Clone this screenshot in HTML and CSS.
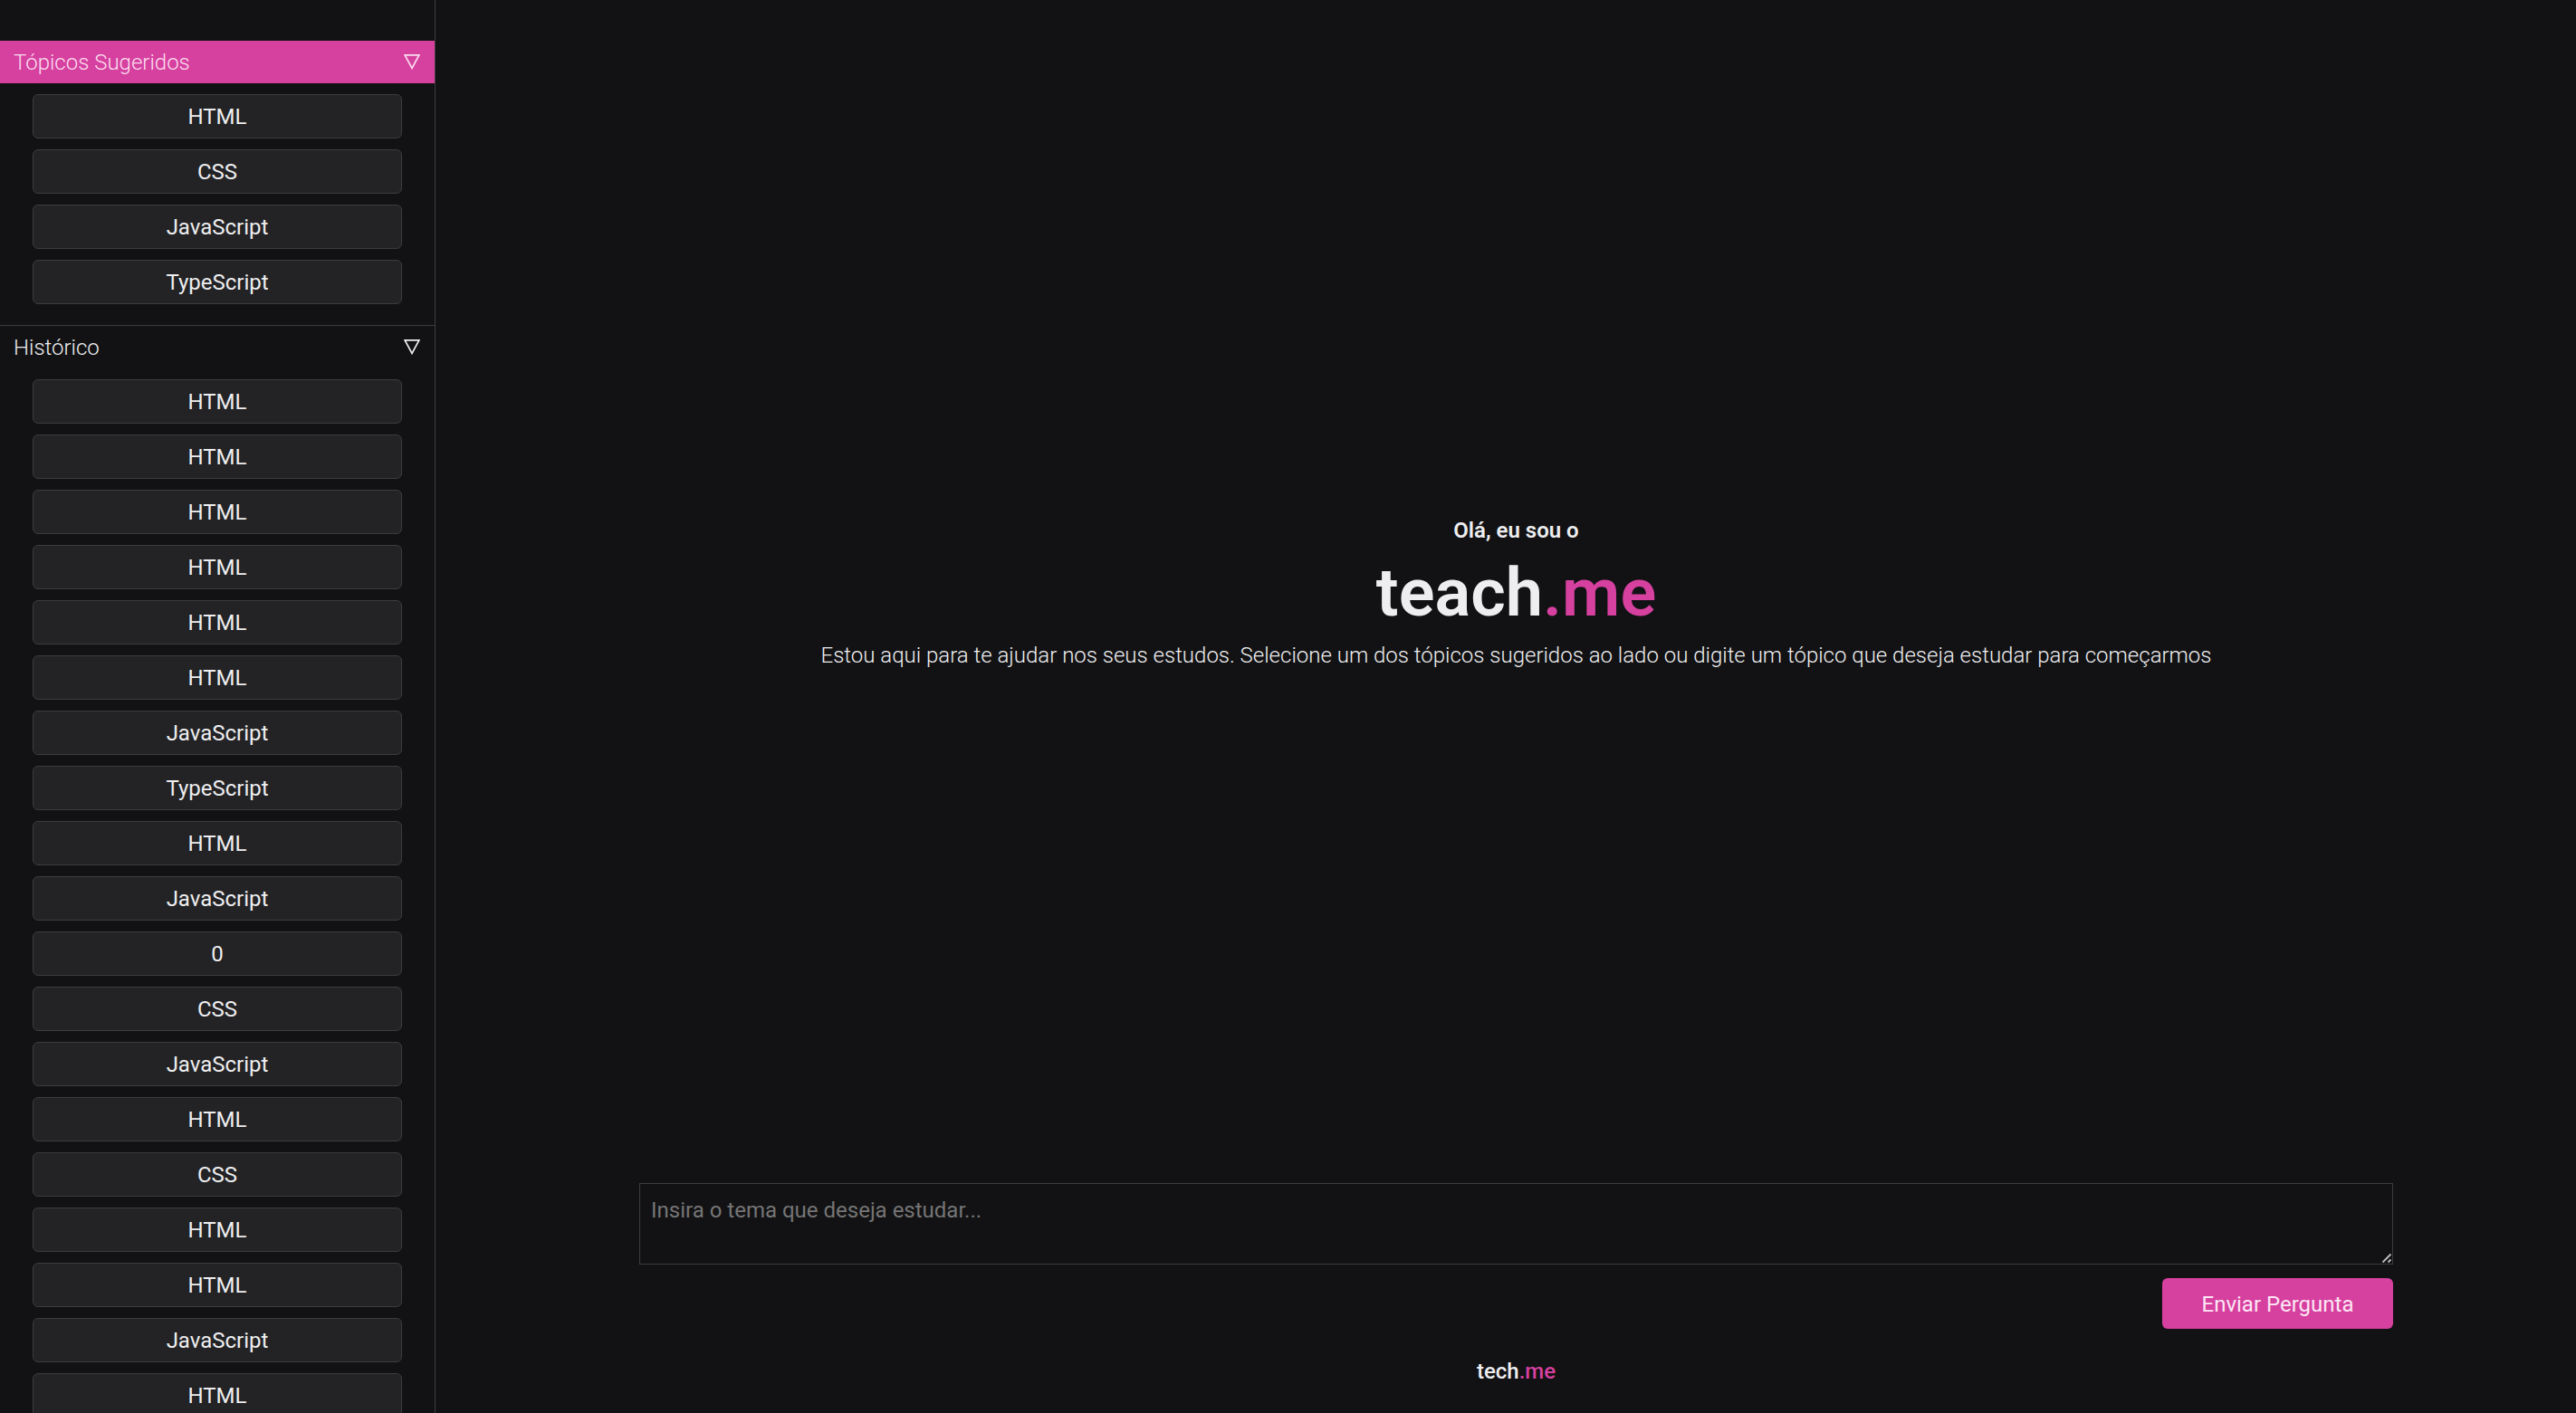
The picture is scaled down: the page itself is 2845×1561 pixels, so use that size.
FILE: index.html
```html
<!DOCTYPE html>
<html lang="pt-BR">
<head>
<meta charset="utf-8">
<meta name="viewport" content="width=device-width, initial-scale=1">
<title>teach.me</title>
<link rel="stylesheet" href="styles.css">
</head>
<body>
<div class="app">
  <aside class="sidebar">
    <section class="group">
      <button type="button" class="group-toggle active" aria-expanded="true">
        <span>Tópicos Sugeridos</span>
        <svg class="chevron" viewBox="0 0 18 17" aria-hidden="true"><path d="M1.2 .9H16.8L9 15.4Z"/></svg>
      </button>
      <ul class="topics">
        <li><button type="button" class="topic">HTML</button></li>
        <li><button type="button" class="topic">CSS</button></li>
        <li><button type="button" class="topic">JavaScript</button></li>
        <li><button type="button" class="topic">TypeScript</button></li>
      </ul>
    </section>
    <section class="group">
      <button type="button" class="group-toggle" aria-expanded="true">
        <span>Histórico</span>
        <svg class="chevron" viewBox="0 0 18 17" aria-hidden="true"><path d="M1.2 .9H16.8L9 15.4Z"/></svg>
      </button>
      <ul class="topics">
        <li><button type="button" class="topic">HTML</button></li>
        <li><button type="button" class="topic">HTML</button></li>
        <li><button type="button" class="topic">HTML</button></li>
        <li><button type="button" class="topic">HTML</button></li>
        <li><button type="button" class="topic">HTML</button></li>
        <li><button type="button" class="topic">HTML</button></li>
        <li><button type="button" class="topic">JavaScript</button></li>
        <li><button type="button" class="topic">TypeScript</button></li>
        <li><button type="button" class="topic">HTML</button></li>
        <li><button type="button" class="topic">JavaScript</button></li>
        <li><button type="button" class="topic">0</button></li>
        <li><button type="button" class="topic">CSS</button></li>
        <li><button type="button" class="topic">JavaScript</button></li>
        <li><button type="button" class="topic">HTML</button></li>
        <li><button type="button" class="topic">CSS</button></li>
        <li><button type="button" class="topic">HTML</button></li>
        <li><button type="button" class="topic">HTML</button></li>
        <li><button type="button" class="topic">JavaScript</button></li>
        <li><button type="button" class="topic">HTML</button></li>
      </ul>
    </section>
  </aside>
  <main class="main">
    <div class="hero">
      <p class="greeting">Olá, eu sou o</p>
      <h1 class="title">teach<span class="accent">.me</span></h1>
      <p class="intro">Estou aqui para te ajudar nos seus estudos. Selecione um dos tópicos sugeridos ao lado ou digite um tópico que deseja estudar para começarmos</p>
    </div>
    <form class="composer">
      <textarea class="question" aria-label="Tema de estudo" placeholder="Insira o tema que deseja estudar..."></textarea>
      <button type="submit" class="send">Enviar Pergunta</button>
    </form>
    <footer class="footer">tech<span class="accent">.me</span></footer>
  </main>
</div>
</body>
</html>
```
FILE: styles.css
```css
:root {
  color-scheme: dark;
  --bg: #121214;
  --surface: #232325;
  --line: #3c3c3f;
  --text: #eeeef0;
  --accent: #d6409f;
}

* {
  box-sizing: border-box;
}

body {
  margin: 0;
  background: var(--bg);
  color: var(--text);
  font: 400 24px/36px Roboto, "Noto Sans", sans-serif;
}

button,
textarea {
  font: inherit;
  color: inherit;
}

button {
  cursor: pointer;
}

.app {
  display: flex;
  height: 100vh;
  overflow: hidden;
}

.sidebar {
  flex: 0 0 481px;
  padding-top: 45px;
  border-right: 1px solid var(--line);
  overflow: hidden;
}

.group + .group {
  border-top: 1px solid var(--line);
}

.group-toggle {
  display: flex;
  align-items: center;
  justify-content: space-between;
  width: 100%;
  height: 47px;
  padding: 0 16px 0 15px;
  border: 0;
  background: none;
  font-weight: 300;
}

.group-toggle.active {
  background: var(--accent);
  color: #fbdcef;
}

.chevron {
  width: 18px;
  height: 17px;
  fill: none;
  stroke: currentColor;
  stroke-width: 1.7;
}

.topics {
  display: flex;
  flex-direction: column;
  gap: 12px;
  margin: 0;
  padding: 12px 36px 23px;
  list-style: none;
}

.topic {
  display: block;
  width: 100%;
  height: 49px;
  padding: 1px 0 0;
  border: 1px solid var(--line);
  border-radius: 6px;
  background: var(--surface);
}

.main {
  flex: 1;
  display: flex;
  flex-direction: column;
  min-width: 0;
  padding-left: 23px;
}

.hero {
  flex: 1;
  display: flex;
  flex-direction: column;
  align-items: center;
  justify-content: center;
  padding-top: 2px;
  text-align: center;
}

.greeting,
.title,
.intro {
  margin: 0;
}

.greeting {
  font-weight: 600;
}

.title {
  font-size: 74px;
  line-height: 102px;
  font-weight: 600;
}

.intro {
  font-weight: 300;
}

.accent {
  color: var(--accent);
}

.composer {
  display: flex;
  flex-direction: column;
  align-items: flex-end;
  gap: 15px;
  padding: 0 202px;
}

.question {
  display: block;
  width: 100%;
  height: 90px;
  padding: 11px 12px;
  border: 1px solid var(--line);
  background: transparent;
  resize: vertical;
}

.question::placeholder {
  color: #757575;
  opacity: 1;
}

.question::-webkit-resizer {
  background: url("data:image/svg+xml,%3Csvg xmlns='http://www.w3.org/2000/svg' width='12' height='12' fill='none' stroke='%23bdbdbd' stroke-width='1.8'%3E%3Cpath d='M1.5 10.5L10.5 1.5M7.5 10.5L10.5 7.5'/%3E%3C/svg%3E") no-repeat right bottom;
}

.send {
  width: 255px;
  height: 56px;
  padding: 1px 0 0;
  border: 0;
  border-radius: 6px;
  background: var(--accent);
  color: #fde6f4;
}

.footer {
  padding: 29px 0 28px;
  text-align: center;
  font-weight: 500;
}
```
